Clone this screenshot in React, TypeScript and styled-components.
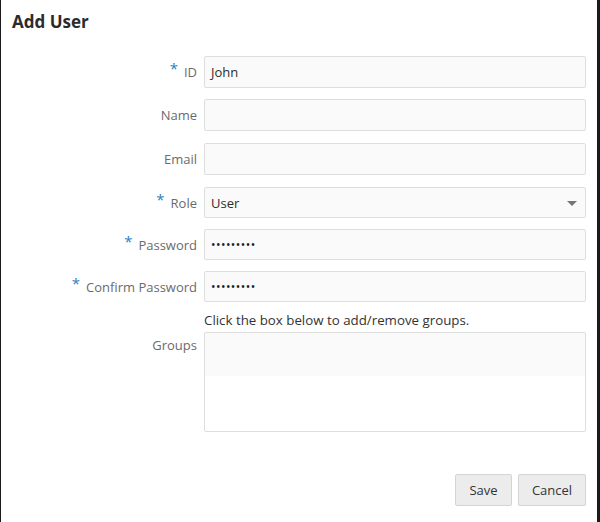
import React from "react";
import styled, { createGlobalStyle } from "styled-components";

const Global = createGlobalStyle`
  html, body { margin: 0; padding: 0; background: #fff; }
  body { font-family: "Open Sans", "Noto Sans", sans-serif; }
`;

const Dialog = styled.div`
  width: 600px;
  height: 522px;
  box-sizing: border-box;
  border-left: 1px solid #1b1b1b;
  border-right: 3px solid #1b1b1b;
  background: #fff;
  display: flex;
  flex-direction: column;
`;

const Title = styled.h1`
  margin: 0;
  padding: 10px 0 0 11px;
  font-size: 17px;
  line-height: 24px;
  font-weight: 700;
  color: #2b2b2b;
`;

const Form = styled.div`
  display: grid;
  grid-template-columns: 196px 382px;
  column-gap: 7px;
  margin-top: 22px;
`;

const Label = styled.label<{ $top?: boolean }>`
  display: flex;
  justify-content: flex-end;
  align-items: ${(p) => (p.$top ? "flex-start" : "center")};
  padding-top: ${(p) => (p.$top ? "4px" : "0")};
  font-size: 13px;
  color: #6b6b6b;
  white-space: nowrap;
`;

const Star = styled.span`
  color: #2a7fc4;
  font-size: 15px;
  position: relative;
  top: -4px;
  margin-right: 6px;
`;

const Field = styled.div<{ $mb: number }>`
  margin-bottom: ${(p) => p.$mb}px;
  position: relative;
`;

const Input = styled.div<{ $h?: number }>`
  box-sizing: border-box;
  height: ${(p) => p.$h ?? 32}px;
  border: 1px solid #dedede;
  border-radius: 2px;
  background: #fafafa;
  display: flex;
  align-items: center;
  padding: 0 6px;
  font-size: 13px;
  color: #2d2d2d;
`;

const Dots = styled.span`
  font-size: 12px;
  letter-spacing: 0.45px;
  color: #1e1e1e;
`;

const Caret = styled.span`
  position: absolute;
  right: 9px;
  top: 14px;
  width: 0;
  height: 0;
  border-left: 5px solid transparent;
  border-right: 5px solid transparent;
  border-top: 5px solid #767676;
`;

const Help = styled.div`
  font-size: 13.3px;
  color: #333;
  line-height: 18px;
  margin-bottom: 3px;
  padding-top: 2px;
  margin-top: -2px;
`;

const GroupBox = styled.div`
  box-sizing: border-box;
  height: 100px;
  border: 1px solid #dedede;
  border-radius: 2px;
  background: linear-gradient(#fafafa 0, #fafafa 43px, #fff 43px);
`;

const Footer = styled.div`
  margin-top: auto;
  display: flex;
  justify-content: flex-end;
  gap: 6px;
  padding: 0 11px 16px 0;
`;

const Button = styled.button<{ $w: number }>`
  box-sizing: border-box;
  width: ${(p) => p.$w}px;
  height: 32px;
  border: 1px solid #d4d4d4;
  border-radius: 2px;
  background: #ececec;
  font-family: inherit;
  font-size: 13px;
  color: #333;
  padding: 0;
`;

const rows = [
  { label: "ID", req: true, value: "John", mb: 11 },
  { label: "Name", req: false, value: "", mb: 12 },
  { label: "Email", req: false, value: "", mb: 12 },
  { label: "Role", req: true, value: "User", mb: 11, select: true, h: 31 },
  { label: "Password", req: true, value: "•••••••••", mb: 11, pw: true, h: 31 },
  { label: "Confirm Password", req: true, value: "•••••••••", mb: 9, pw: true, h: 31 },
];

export default function App() {
  return (
    <>
      <Global />
      <Dialog>
        <Title>Add User</Title>
        <Form>
          {rows.map((r) => (
            <React.Fragment key={r.label}>
              <Label style={{ marginBottom: r.mb }}>
                {r.req && <Star>*</Star>}
                {r.label}
              </Label>
              <Field $mb={r.mb}>
                <Input $h={r.h}>{r.pw ? <Dots>{r.value}</Dots> : r.value}</Input>
                {r.select && <Caret />}
              </Field>
            </React.Fragment>
          ))}
          <div />
          <Help>Click the box below to add/remove groups.</Help>
          <Label $top>Groups</Label>
          <GroupBox />
        </Form>
        <Footer>
          <Button $w={57}>Save</Button>
          <Button $w={68}>Cancel</Button>
        </Footer>
      </Dialog>
    </>
  );
}
